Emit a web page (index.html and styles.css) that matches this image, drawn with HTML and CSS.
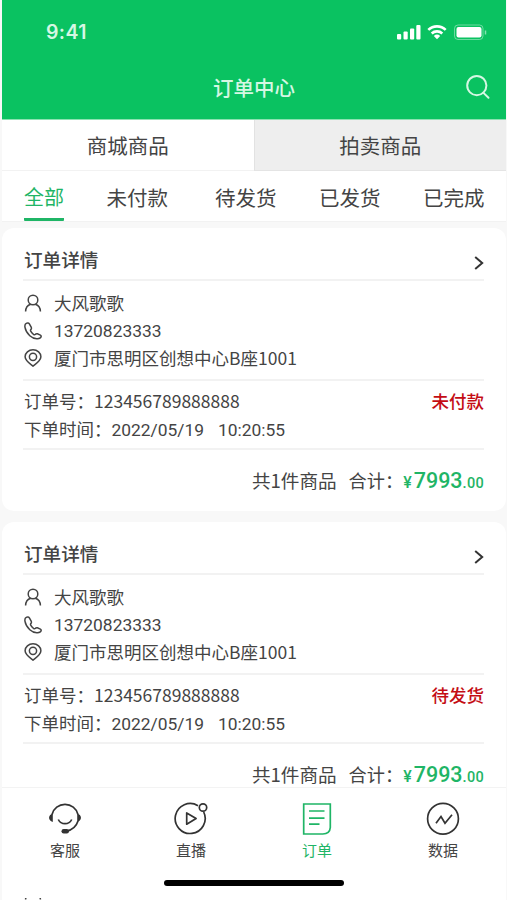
FILE: index.html
```html
<!DOCTYPE html>
<html lang="zh-CN">
<head>
    <meta charset="UTF-8">
    <title>订单中心</title>
    <link rel="stylesheet" href="styles.css">
</head>
<body>
    <svg class="symbols" width="0" height="0">
        <symbol id="icon-user" viewBox="0 0 18 18">
            <circle cx="9" cy="6" r="4.8"/>
            <path d="M1.6 17.400C1.700 13.500 4 11 6.700 10.200M11.300 10.200c2.700.8 5 3.300 5.100 7.200"/>
        </symbol>
        <symbol id="icon-phone" viewBox="0 0 18 18">
            <path d="M2.200 1.400C1 2.100.7 3.700 1 5.400c.5 3 2.300 6 4.800 8.300 2.200 2 5.200 3.200 7.700 3 1.900-.1 3.300-1 3.600-2 .2-.7-.1-1.300-.7-1.600l-3.100-1.300c-.8-.3-1.400 0-2 .6-.6.5-1.100.4-1.800-.1-1.200-.9-2.200-2-2.800-3.200-.4-.7-.2-1.200.3-1.700.5-.6.6-1.200.3-2L5.500 2.100c-.6-1.100-2-1.500-3.300-.7z"/>
        </symbol>
        <symbol id="icon-pin" viewBox="0 0 18 18">
            <path d="M9 17.200C5 14 1.100 11.400 1.100 7.700a7.900 6.900 0 0 1 15.800 0c0 3.700-3.900 6.300-7.900 9.500z"/>
            <circle cx="9" cy="7.800" r="3.600"/>
        </symbol>
        <symbol id="icon-arrow" viewBox="0 0 10 14">
            <path d="M1.200 1l7 6-7 6"/>
        </symbol>
    </svg>

    <div class="screen">
        <header class="header">
            <div class="status-bar">
                <span class="time">9:41</span>
                <svg class="signals" width="92" height="18" viewBox="0 0 92 18">
                    <g fill="#fff">
                        <rect x="1" y="11" width="4.200" height="5.500" rx="1"/>
                        <rect x="7.500" y="8.500" width="4.200" height="8" rx="1"/>
                        <rect x="14" y="5.500" width="4.200" height="11" rx="1"/>
                        <rect x="20.300" y="2" width="4.200" height="14.500" rx="1"/>
                        <path d="M41 16.300l-3.200-3.300a4.700 4.700 0 0 1 6.400 0z"/>
                        <rect x="60.500" y="4" width="25" height="10.500" rx="2"/>
                    </g>
                    <g fill="none" stroke="#fff">
                        <path d="M32.300 6.900a12.500 12.500 0 0 1 17.400 0M35.700 10.500a7.800 7.800 0 0 1 10.600 0" stroke-width="2.600"/>
                        <rect x="58.500" y="2" width="28.500" height="14.500" rx="3.500" opacity=".4"/>
                        <path d="M89.500 7.500v4" stroke-width="1.500" opacity=".5"/>
                    </g>
                </svg>
            </div>
            <div class="title-bar">
                <h1>订单中心</h1>
                <svg class="search" width="26" height="26" viewBox="0 0 26 26">
                    <circle cx="11.800" cy="11.600" r="9.600"/>
                    <path d="M18.200 18.600l5.300 5.200"/>
                </svg>
            </div>
        </header>

        <div class="tabs">
            <div class="tab">商城商品</div>
            <div class="tab inactive">拍卖商品</div>
        </div>

        <div class="filters">
            <span class="filter active">全部</span>
            <span class="filter">未付款</span>
            <span class="filter">待发货</span>
            <span class="filter">已发货</span>
            <span class="filter">已完成</span>
        </div>

        <main class="orders">
            <section class="card">
                <div class="card-title"><h2>订单详情</h2><svg class="arrow"><use href="#icon-arrow"/></svg></div>
                <div class="customer">
                    <p><svg class="icon"><use href="#icon-user"/></svg>大风歌歌</p>
                    <p class="num"><svg class="icon"><use href="#icon-phone"/></svg>13720823333</p>
                    <p><svg class="icon"><use href="#icon-pin"/></svg>厦门市思明区创想中心B座1001</p>
                </div>
                <div class="info">
                    <p>订单号：123456789888888 <b class="state">未付款</b></p>
                    <p><span>下单时间：<span class="num">2022/05/19</span><span class="num clock">10:20:55</span></span></p>
                </div>
                <div class="total"><span>共1件商品</span><span class="sum">合计：</span><span class="price"><small>¥</small>7993<small class="cents">.00</small></span></div>
            </section>

            <section class="card">
                <div class="card-title"><h2>订单详情</h2><svg class="arrow"><use href="#icon-arrow"/></svg></div>
                <div class="customer">
                    <p><svg class="icon"><use href="#icon-user"/></svg>大风歌歌</p>
                    <p class="num"><svg class="icon"><use href="#icon-phone"/></svg>13720823333</p>
                    <p><svg class="icon"><use href="#icon-pin"/></svg>厦门市思明区创想中心B座1001</p>
                </div>
                <div class="info">
                    <p>订单号：123456789888888 <b class="state">待发货</b></p>
                    <p><span>下单时间：<span class="num">2022/05/19</span><span class="num clock">10:20:55</span></span></p>
                </div>
                <div class="total"><span>共1件商品</span><span class="sum">合计：</span><span class="price"><small>¥</small>7993<small class="cents">.00</small></span></div>
            </section>

            <!-- continues below the nav -->
            <section class="card">
                <div class="card-title"></div>
                <div class="customer">
                    <p><svg class="icon"><use href="#icon-user"/></svg></p>
                </div>
            </section>
        </main>

        <nav class="nav">
            <div class="nav-items">
                <a class="nav-item">
                    <svg width="36" height="36" viewBox="0 0 36 36">
                        <path d="M5 14.500a13.400 13.400 0 0 1 26 0M31 21c-1.600 5.300-5.500 9-12 10.300M11.300 19.500c2.700 5.600 10.700 5.600 13.400 0"/>
                        <path class="solid" d="M5.800 13.500v8.500c-5-1.300-5-7.200 0-8.500zM30.200 13.500v8.500c5-1.300 5-7.200 0-8.500z"/>
                        <rect class="solid" x="14.500" y="29" width="7.500" height="4.500" rx="2.200"/>
                    </svg>
                    <span>客服</span>
                </a>
                <a class="nav-item">
                    <svg width="36" height="36" viewBox="0 0 36 36">
                        <path d="M25 5.700A15 15 0 1 0 30.700 12"/>
                        <circle cx="30" cy="7.500" r="3.700"/>
                        <path d="M13.700 13v11.200l9.400-5.600z" stroke-linejoin="round"/>
                    </svg>
                    <span>直播</span>
                </a>
                <a class="nav-item active">
                    <svg width="36" height="36" viewBox="0 0 36 36">
                        <path d="M4.700 4h26.600V27.500q-.5 6.500-7.500 6.500H4.700zM10 11h15.500M10 18.200h15.500M10 24.200h10.500"/>
                    </svg>
                    <span>订单</span>
                </a>
                <a class="nav-item">
                    <svg width="36" height="36" viewBox="0 0 36 36">
                        <circle cx="18" cy="18.800" r="15.400"/>
                        <path d="M11 23.200l5-6.700 4 6.700 7-8.500"/>
                    </svg>
                    <span>数据</span>
                </a>
            </div>
            <div class="home-bar"></div>
        </nav>
    </div>
</body>
</html>
```
FILE: styles.css
```css
* {
    box-sizing: border-box;
}
body {
    margin: 0;
    font-family: "Noto Sans CJK SC", sans-serif;
    color: #444;
    background-color: #f8f8f8;
}
h1, h2, p {
    margin: 0;
}
svg {
    fill: none;
    flex-shrink: 0;
}
.symbols {
    display: block;
}
.screen {
    height: 900px;
    overflow: hidden;
    padding: 0 1px 0 2px;
}
.header {
    height: 120px;
    background-color: #0ac261;
    border-bottom: 1px solid #8ce2b2;
    color: #d5f7e3;
}
.status-bar {
    display: flex;
    justify-content: space-between;
    align-items: center;
    height: 63px;
    padding: 0 18px 0 44px;
}
.time {
    font: 600 19.5px Inter, sans-serif;
    letter-spacing: 0.4px;
}
.title-bar {
    display: grid;
    grid-template-columns: 1fr auto 1fr;
    align-items: center;
    height: 48px;
    padding: 0 15px;
}
.title-bar h1 {
    grid-column: 2;
    font-size: 20.5px;
    font-weight: 500;
}
.search {
    justify-self: end;
    stroke: #d5f7e3;
    stroke-width: 2;
    stroke-linecap: round;
}
.tabs {
    display: flex;
    height: 51px;
}
.tab {
    flex: 1;
    background-color: #fff;
    border-bottom: 1px solid #f2f2f2;
    font-size: 20.5px;
    line-height: 50px;
    text-align: center;
}
.tab.inactive {
    background-color: #eee;
    border-left: 1px solid #e2e2e2;
    border-bottom-color: #e4e4e4;
}
.filters {
    display: flex;
    height: 51px;
    padding: 0 21px 0 22px;
    background-color: #fff;
    border-bottom: 1px solid #f2f2f2;
    font-size: 20.5px;
    line-height: 52px;
}
.filter {
    margin-left: 42.5px;
}
.filter:nth-child(3) {
    margin-left: 47px;
}
.filter.active {
    height: 50px;
    margin-left: 0;
    font-size: 20px;
    color: #1fb566;
    border-bottom: 3px solid #1fb566;
    border-radius: 1px;
}
.orders {
    display: flex;
    flex-direction: column;
    gap: 11px;
    padding-top: 6px;
}
.card {
    height: 283px;
    flex-shrink: 0;
    padding: 0 22px 0 21px;
    background-color: #fff;
    border-radius: 12px;
    font-size: 17.5px;
    line-height: 28px;
}
.card-title {
    display: flex;
    justify-content: space-between;
    align-items: center;
    height: 53px;
    padding: 18px 0 0 1px;
    border-bottom: 2px solid #f2f2f2;
}
.card-title h2 {
    font-size: 18.6px;
    font-weight: 500;
    margin-top: -8px;
}
.arrow {
    width: 10px;
    height: 14px;
    stroke: #333;
    stroke-width: 2;
}
.customer {
    height: 100px;
    padding: 8px 0 0 1px;
    border-bottom: 2px solid #f2f2f2;
}
.customer p {
    display: flex;
    align-items: center;
    gap: 12px;
    height: 27.5px;
}
.customer .num {
    padding-top: 1px;
}
.icon {
    width: 18px;
    height: 18px;
    stroke: #444;
    stroke-width: 1.5;
}
.num {
    font-family: Roboto, "Noto Sans CJK SC", sans-serif;
    font-size: 17.4px;
}
.info {
    height: 69px;
    padding: 6px 0 0 1px;
    border-bottom: 2px solid #f2f2f2;
}
.info p {
    display: flex;
    justify-content: space-between;
}
.state {
    color: #c40d14;
    font-weight: 500;
}
.clock {
    margin-left: 14px;
}
.total {
    display: flex;
    justify-content: flex-end;
    align-items: baseline;
    padding-top: 16px;
    font-size: 18.6px;
}
.sum {
    margin-left: 12px;
    font-size: 18.2px;
}
.price {
    color: #1fb566;
    font-family: Roboto, sans-serif;
    font-size: 21.5px;
    font-weight: 500;
}
.price small {
    font-size: 16px;
    margin-right: 2px;
}
.price .cents {
    margin-right: 0;
    font-size: 14.5px;
    letter-spacing: 0.3px;
}
.nav {
    position: absolute;
    left: 2px;
    right: 1px;
    top: 787px;
    height: 111px;
    background-color: #fff;
    border-top: 1px solid #f3f3f3;
}
.nav-items {
    display: flex;
    padding: 12px 0 0;
}
.nav-item {
    flex: 1;
    display: flex;
    flex-direction: column;
    align-items: center;
    font-size: 15px;
    line-height: 24px;
    gap: 2px;
}
.nav-item svg {
    stroke: #333;
    stroke-width: 1.7;
}
.nav-item .solid {
    fill: #333;
    stroke: none;
}
.nav-item.active {
    color: #1fb566;
}
.nav-item.active svg {
    stroke: #1fb566;
}
.home-bar {
    width: 180px;
    height: 6px;
    margin: 18px auto 0;
    border-radius: 3px;
    background-color: #000;
}
```
